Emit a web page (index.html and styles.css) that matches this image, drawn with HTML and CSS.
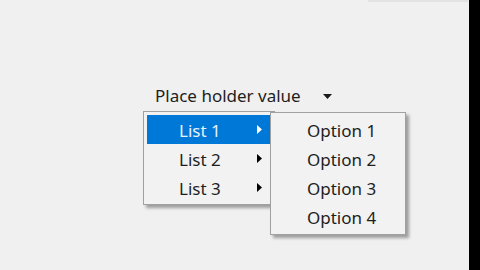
FILE: index.html
```html
<!DOCTYPE html>
<html>
<head>
<meta charset="utf-8">
<link rel="stylesheet" href="styles.css">
</head>
<body>
<div class="page">
  <div class="main">
    <div class="topline"></div>
    <div class="combo">
      <div class="combo-head">
        <span class="combo-value">Place holder value</span>
        <svg class="combo-arrow" width="9" height="5" viewBox="0 0 9 5"><path d="M0 0H9L4.5 5Z" fill="#1a1a1a"/></svg>
      </div>
      <div class="menu menu-main">
        <div class="item active"><span>List 1</span><svg class="sub" width="5" height="9" viewBox="0 0 5 9"><path d="M0 0L5 4.5L0 9Z" fill="#fff"/></svg></div>
        <div class="item"><span>List 2</span><svg class="sub" width="5" height="9" viewBox="0 0 5 9"><path d="M0 0L5 4.5L0 9Z" fill="#000"/></svg></div>
        <div class="item"><span>List 3</span><svg class="sub" width="5" height="9" viewBox="0 0 5 9"><path d="M0 0L5 4.5L0 9Z" fill="#000"/></svg></div>
      </div>
      <div class="menu menu-sub">
        <div class="item"><span>Option 1</span></div>
        <div class="item"><span>Option 2</span></div>
        <div class="item"><span>Option 3</span></div>
        <div class="item"><span>Option 4</span></div>
      </div>
    </div>
  </div>
  <div class="strip"></div>
</div>
</body>
</html>
```
FILE: styles.css
```css
html, body {
  margin: 0;
  padding: 0;
  background: #f0f0f0;
}
body {
  font-family: "Noto Sans", "Open Sans", sans-serif;
  color: #1e1e1e;
  width: 480px;
  height: 270px;
  overflow: hidden;
}
.page {
  display: flex;
  width: 480px;
  height: 270px;
}
.main {
  width: 469px;
  height: 270px;
  background: #f0f0f0;
  display: flex;
  flex-direction: column;
}
.strip {
  width: 11px;
  height: 270px;
  background: #000;
}
.topline {
  margin-left: 368px;
  width: 100px;
  height: 2px;
  background: #e2e2e2;
}
.combo {
  position: relative;
  margin-top: 82px;
  margin-left: 155px;
}
.combo-head {
  display: flex;
  align-items: center;
  height: 24px;
  font-size: 17px;
  line-height: 24px;
}
.combo-arrow {
  margin-left: 22px;
  margin-top: 1px;
}
.menu {
  position: absolute;
  background: #f2f2f2;
  border: 1px solid #a0a0a0;
  box-shadow: 3px 3px 3px rgba(0, 0, 0, 0.35);
  font-size: 17px;
  color: #1e1e1e;
}
.menu-main {
  left: -12px;
  top: 27px;
  width: 124px;
  padding: 3px 3px 2px 3px;
}
.menu-sub {
  left: 115px;
  top: 28px;
  width: 134px;
  padding: 2px 0 3px 0;
}
.item {
  height: 29px;
  display: flex;
  align-items: center;
  position: relative;
  padding-top: 1px;
  box-sizing: border-box;
}
.menu-main .item {
  padding-left: 32px;
}
.menu-sub .item {
  padding-left: 36px;
}
.item.active {
  background: #0078d7;
  color: #e8f2fc;
}
.sub {
  position: absolute;
  left: 110px;
  top: 10px;
}
```
